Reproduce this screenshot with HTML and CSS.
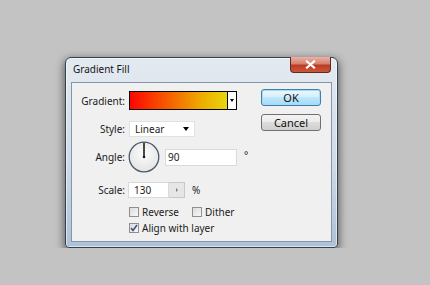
FILE: index.html
```html
<!DOCTYPE html>
<html lang="en">
<head>
  <meta charset="UTF-8">
  <title>Gradient Fill</title>
  <link rel="stylesheet" href="styles.css">
</head>
<body>
  <div class="window">
    <div class="titlebar">
      <span class="title">Gradient Fill</span>
      <span class="close">
        <svg width="11" height="9" viewBox="0 0 11 9"><path d="M2 1.5 L9 7.5 M9 1.5 L2 7.5" stroke="#fff" stroke-width="2.2" stroke-linecap="square"/></svg>
      </span>
    </div>
    <div class="client">
      <div class="form">
        <div class="row row-gradient">
          <label>Gradient:</label>
          <div class="swatch">
            <span class="swatch-fill"></span>
            <span class="swatch-arrow"><i class="tri-down"></i></span>
          </div>
        </div>

        <div class="row row-style">
          <label>Style:</label>
          <div class="select">
            <span>Linear</span>
            <i class="tri-down"></i>
          </div>
        </div>

        <div class="row row-angle">
          <label>Angle:</label>
          <svg class="dial" width="32" height="32" viewBox="0 0 32 32">
            <defs>
              <radialGradient id="dialFill" cx="50%" cy="40%" r="60%">
                <stop offset="0" stop-color="#fbfbfb"/>
                <stop offset="1" stop-color="#e4e4e4"/>
              </radialGradient>
            </defs>
            <circle cx="16" cy="16" r="14.8" fill="url(#dialFill)" stroke="#4b5866" stroke-width="1.3"/>
            <line x1="16" y1="16" x2="16" y2="1.8" stroke="#1c1c1c" stroke-width="1.6"/>
            <circle cx="16" cy="16" r="1.3" fill="#1c1c1c"/>
          </svg>
          <div class="input input-angle">90</div>
          <span class="unit degree">°</span>
        </div>

        <div class="row row-scale">
          <label>Scale:</label>
          <div class="input input-scale">130</div>
          <span class="spinner"><i class="tri-right"></i></span>
          <span class="unit">%</span>
        </div>

        <div class="row row-check">
          <span class="check check-reverse"><i class="box"></i>Reverse</span>
          <span class="check"><i class="box"></i>Dither</span>
        </div>

        <div class="row row-check row-align">
          <span class="check">
            <i class="box checked">
              <svg width="8" height="8" viewBox="0 0 8 8"><path d="M1 4 L3 6.5 L7 1" fill="none" stroke="#3d527f" stroke-width="1.6"/></svg>
            </i>Align with layer
          </span>
        </div>
      </div>

      <div class="buttons">
        <button class="btn btn-default">OK</button>
        <button class="btn">Cancel</button>
      </div>
    </div>
  </div>
</body>
</html>
```

FILE: styles.css
```css
body {
  margin: 0;
  background: #c3c3c3;
  font-family: "Noto Sans", "Open Sans", sans-serif;
  font-size: 10px;
  color: #1b1b1b;
}

.window {
  box-sizing: border-box;
  width: 273px;
  height: 191px;
  margin: 57px 0 0 65px;
  border: 1px solid #33404e;
  border-radius: 6px 6px 4px 4px;
  padding: 0 5px 5px;
  background: linear-gradient(#e4eaf1, #cfdbe7 55%, #adc1d7);
  box-shadow: 0 3px 8px 1px rgba(0, 0, 0, 0.55), inset 0 0 0 1px rgba(255, 255, 255, 0.55);
  display: flex;
  flex-direction: column;
}

.titlebar {
  height: 24px;
  display: flex;
  align-items: flex-start;
  padding-left: 2px;
}
.title { padding-top: 4px; line-height: 14px; color: #151515; }
.close {
  margin: -1px 1px 0 auto;
  width: 41px;
  height: 16px;
  box-sizing: border-box;
  border: 1px solid #5e2b22;
  border-top: none;
  border-radius: 0 0 4px 4px;
  background: linear-gradient(#e9b3a6, #d7806d 45%, #bd3b24 55%, #c9573c);
  display: flex;
  align-items: center;
  justify-content: center;
}

.client {
  flex: 1;
  display: flex;
  background: #f0f0f0;
  border: 1px solid #8496aa;
}

.form { padding: 8px 0 0 6px; }
.row { display: flex; align-items: center; }
.row label { width: 47px; margin-right: 3px; text-align: right; }

.row-gradient { height: 19px; }
.swatch {
  margin-left: 1px;
  width: 108px;
  height: 19px;
  box-sizing: border-box;
  border: 1px solid #000;
  display: flex;
}
.swatch-fill {
  flex: 1;
  background: linear-gradient(to right, #ff0600, #f46a00 45%, #eeae00 75%, #e7d50f);
}
.swatch-arrow {
  width: 8px;
  border-left: 1px solid #000;
  background: #fff;
  display: flex;
  align-items: center;
  justify-content: center;
}

.tri-down {
  width: 0;
  height: 0;
  border-left: 2.5px solid transparent;
  border-right: 2.5px solid transparent;
  border-top: 3px solid #000;
}
.tri-right {
  width: 0;
  height: 0;
  border-top: 2px solid transparent;
  border-bottom: 2px solid transparent;
  border-left: 2px solid #7a7a7a;
}

.row-style { height: 16px; margin-top: 11px; }
.select {
  margin-left: 1px;
  width: 66px;
  height: 16px;
  box-sizing: border-box;
  background: #fff;
  border: 1px solid #e2e2e2;
  padding: 0 5px;
  display: flex;
  align-items: center;
  justify-content: space-between;
}
.select .tri-down { border-left-width: 3px; border-right-width: 3px; border-top-width: 4px; }

.row-angle { height: 32px; margin-top: 4px; }
.input {
  height: 17px;
  box-sizing: border-box;
  background: #fff;
  border: 1px solid #dadada;
  line-height: 15px;
}
.input-angle { width: 72px; margin-left: 5px; padding-left: 2px; }
.unit { margin-left: 7px; }
.degree { align-self: flex-start; margin-top: 7px; }

.row-scale { height: 16px; margin-top: 9px; }
.input-scale { width: 41px; height: 16px; padding-left: 5px; }
.spinner {
  width: 16px;
  height: 16px;
  box-sizing: border-box;
  background: #e6e6e6;
  border: 1px solid #c9c9c9;
  border-left: none;
  display: flex;
  align-items: center;
  justify-content: center;
}

.row-check { height: 13px; margin-top: 7px; padding-left: 51px; }
.row-align { margin-top: 3px; }
.check { display: flex; align-items: center; }
.check-reverse { width: 63px; }
.box {
  width: 10px;
  height: 10px;
  margin-right: 3px;
  box-sizing: border-box;
  border: 1px solid #8f8f8f;
  background: linear-gradient(135deg, #dcdcdc, #f8f8f8);
  display: flex;
  align-items: center;
  justify-content: center;
}

.buttons {
  margin-left: auto;
  padding: 6px 10px 0 0;
  display: flex;
  flex-direction: column;
  gap: 8px;
}
.btn {
  width: 60px;
  height: 17px;
  padding: 0;
  font-family: inherit;
  font-size: 11px;
  line-height: 13px;
  color: #111;
  border: 1px solid #707070;
  border-radius: 3px;
  background: linear-gradient(#f3f3f3, #ebebeb 45%, #dcdcdc 50%, #cfcfcf);
}
.btn-default {
  border-color: #3c7fb1;
  box-shadow: inset 0 0 0 1px #a8dcf5;
  background: linear-gradient(#eaf6fd, #d9f0fc 45%, #bee6fd 50%, #a7d9f5);
}
```
